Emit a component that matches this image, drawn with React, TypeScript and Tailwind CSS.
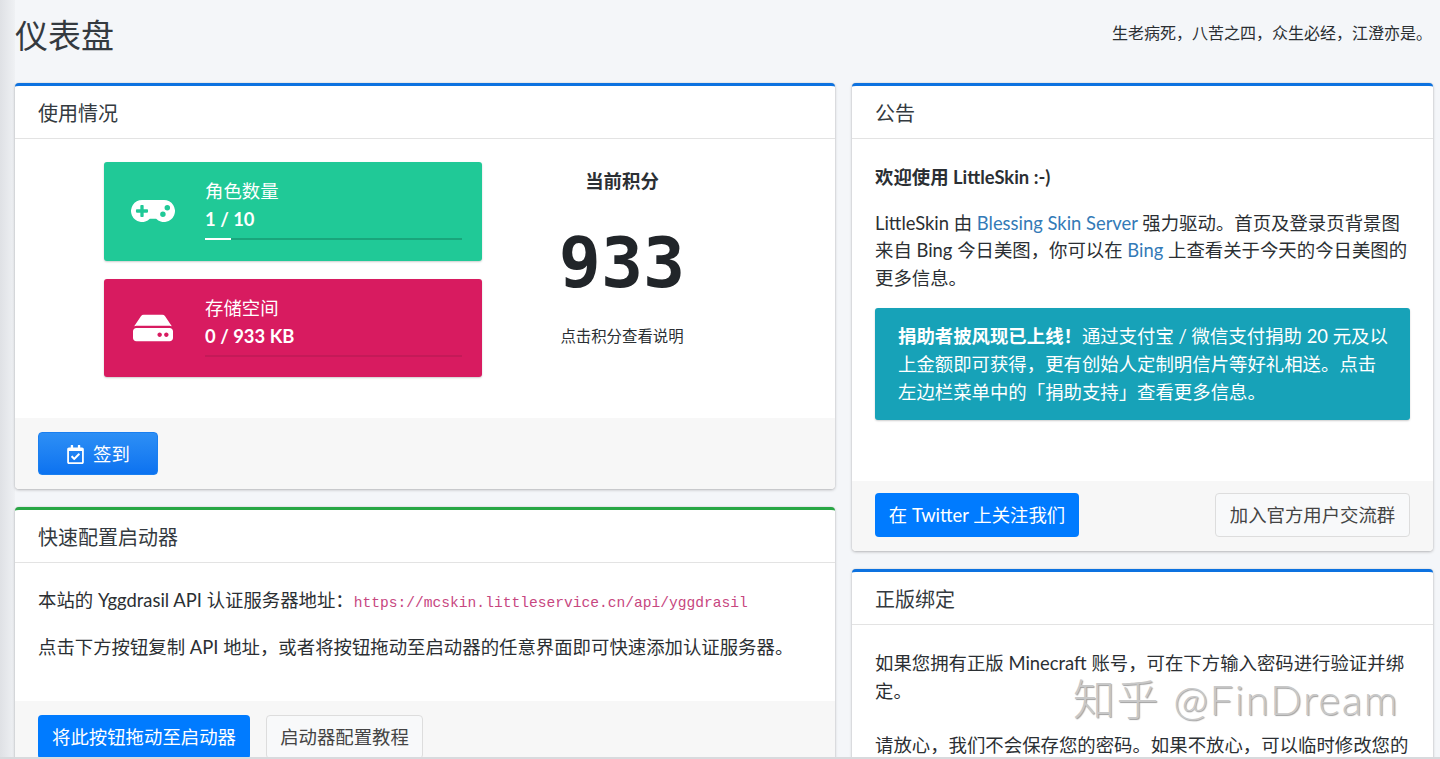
import { FaGamepad, FaHdd, FaRegCalendarCheck } from "react-icons/fa";
import type { ReactNode } from "react";

function Card({ title, top, children, className = "" }: { title: string; top: string; children: ReactNode; className?: string }) {
  return (
    <div className={`flex flex-col bg-white rounded border-t-[3px] shadow-[0_0_1px_rgba(0,0,0,0.2),0_1px_3px_rgba(0,0,0,0.25)] ${top} ${className}`}>
      <div className="h-[53px] shrink-0 flex items-center px-[23px] pt-[4px] border-b border-[#e3e3e3] text-[20px] text-[#343a40]">
        {title}
      </div>
      {children}
    </div>
  );
}

function InfoBox({ color, bar, icon, label, value, percent }: { color: string; bar: string; icon: ReactNode; label: string; value: string; percent: number }) {
  return (
    <div className={`h-[98.5px] rounded-[3px] flex text-white shadow-[0_1px_2px_rgba(0,0,0,0.2)] ${color}`}>
      <div className="w-[101px] shrink-0 flex items-center justify-center pr-[3px] text-[44px]">{icon}</div>
      <div className="flex-1 pr-[20px] pt-[16px]">
        <div className="text-[18.4px] leading-[26px]">{label}</div>
        <div className="text-[18.4px] leading-[28px] mt-[1px] font-bold">{value}</div>
        <div className={`h-[2px] mt-[5px] ${bar}`}>
          <div className="h-full bg-white" style={{ width: `${percent}%` }} />
        </div>
      </div>
    </div>
  );
}

export default function App() {
  return (
    <div
      className="relative h-screen overflow-hidden bg-[#f4f6f9] text-[18.4px] leading-[27.6px] text-[#2b2f33]"
      style={{ fontFamily: 'Lato, "Noto Sans CJK SC", sans-serif' }}
    >
      {/* sidebar shadow on the left edge */}
      <div className="absolute left-0 top-0 bottom-0 w-[15px] bg-gradient-to-r from-[#dfe1e5] to-[#eff1f4]" />

      <div className="relative h-[83px] pl-[15px] pr-[8px] flex items-center justify-between pb-[11px]">
        <h1 className="text-[33px] text-[#343a40] font-normal">仪表盘</h1>
        <div className="text-[16px] mt-[-7px]">生老病死，八苦之四，众生必经，江澄亦是。</div>
      </div>

      <div className="relative flex pl-[15px] gap-[17px] items-start">
        {/* left column */}
        <div className="w-[820px] flex flex-col gap-[18px]">
          <Card title="使用情况" top="border-[#0d72e0]">
            <div className="h-[279px] flex pl-[89px] pt-[23px]">
              <div className="w-[378px] flex flex-col gap-[18px]">
                <InfoBox color="bg-[#20c997]" bar="bg-[#19a57b]" icon={<FaGamepad />} label="角色数量" value="1 / 10" percent={10} />
                <InfoBox color="bg-[#d81b60]" bar="bg-[#c41a58]" icon={<FaHdd className="text-[40px]" />} label="存储空间" value="0 / 933 KB" percent={0} />
              </div>
              <div className="w-[280px] flex flex-col items-center">
                <div className="font-bold text-[18.4px] mt-[6px]">当前积分</div>
                <div
                  className="text-[70px] leading-[60px] font-bold mt-[37px] text-[#212529]"
                  style={{ fontFamily: '"DejaVu Sans Mono", monospace' }}
                >
                  933
                </div>
                <div className="text-[15.4px] mt-[30px]">点击积分查看说明</div>
              </div>
            </div>
            <div className="h-[71px] bg-[#f7f7f7] rounded-b px-[23px] flex items-center">
              <button className="w-[120px] h-[43px] pt-[2px] rounded bg-gradient-to-b from-[#2d8ff5] to-[#0b72f0] text-white flex items-center justify-center gap-[8px] text-[18.4px] border border-[#1a7ff0]">
                <FaRegCalendarCheck className="text-[19px]" />
                签到
              </button>
            </div>
          </Card>

          <Card title="快速配置启动器" top="border-[#28a745]">
            <div className="h-[138px] px-[23px] pt-[24px]">
              <p className="h-[27.6px] whitespace-nowrap">
                本站的 Yggdrasil API 认证服务器地址：
                <code
                  className="text-[14.6px] text-[#c7477f]"
                  style={{ fontFamily: '"Liberation Mono", monospace' }}
                >
                  https://mcskin.littleservice.cn/api/yggdrasil
                </code>
              </p>
              <p className="mt-[19px] whitespace-nowrap">点击下方按钮复制 API 地址，或者将按钮拖动至启动器的任意界面即可快速添加认证服务器。</p>
            </div>
            <div className="h-[80px] bg-[#f7f7f7] px-[23px] pt-[14px] flex gap-[16px] items-start">
              <button className="h-[44px] w-[212px] pt-[2px] rounded bg-[#007bff] text-white">将此按钮拖动至启动器</button>
              <button className="h-[44px] w-[157px] pt-[2px] rounded bg-[#f8f9fa] border border-[#dddddd] text-[#444444]">启动器配置教程</button>
            </div>
          </Card>
        </div>

        {/* right column */}
        <div className="w-[581px] flex flex-col gap-[18px]">
          <Card title="公告" top="border-[#0d72e0]">
            <div className="h-[342px] px-[23px] pt-[25px]">
              <p className="font-bold">欢迎使用 LittleSkin :-)</p>
              <p className="mt-[18px]">
                LittleSkin 由 <span className="text-[#337ab7]">Blessing Skin Server</span> 强力驱动。首页及登录页背景图来自 Bing 今日美图，你可以在 <span className="text-[#337ab7]">Bing</span> 上查看关于今天的今日美图的更多信息。
              </p>
              <div className="mt-[16px] h-[112px] rounded-[3px] bg-[#17a2b8] text-white pl-[23px] pr-[20px] pt-[15px] shadow-[0_1px_2px_rgba(0,0,0,0.2)]">
                <b>捐助者披风现已上线！</b>通过支付宝 / 微信支付捐助 20 元及以上金额即可获得，更有创始人定制明信片等好礼相送。点击左边栏菜单中的「捐助支持」查看更多信息。
              </div>
            </div>
            <div className="h-[70px] bg-[#f7f7f7] rounded-b px-[23px] pb-[2px] flex items-center justify-between">
              <button className="h-[44px] w-[204px] pt-[2px] rounded bg-[#007bff] text-white">在 Twitter 上关注我们</button>
              <button className="h-[44px] w-[195px] pt-[2px] rounded bg-[#f8f9fa] border border-[#dddddd] text-[#444444]">加入官方用户交流群</button>
            </div>
          </Card>

          <Card title="正版绑定" top="border-[#0d72e0]">
            <div className="px-[23px] pt-[25px] pb-[40px]">
              <p>如果您拥有正版 Minecraft 账号，可在下方输入密码进行验证并绑定。</p>
              <p className="mt-[27px]">请放心，我们不会保存您的密码。如果不放心，可以临时修改您的</p>
            </div>
          </Card>
        </div>
      </div>

      {/* zhihu watermark */}
      <div className="absolute left-[1073px] top-[671px] text-[42px] leading-[56px] font-light whitespace-nowrap text-[#c8c8c8] [text-shadow:1px_1px_1px_#a0a0a0] tracking-[1.6px]">
        知乎 @FinDream
      </div>

      {/* thin line along the bottom of the capture */}
      <div className="absolute left-0 right-0 bottom-0 h-[2px] bg-[#d8dadd]" />
    </div>
  );
}
